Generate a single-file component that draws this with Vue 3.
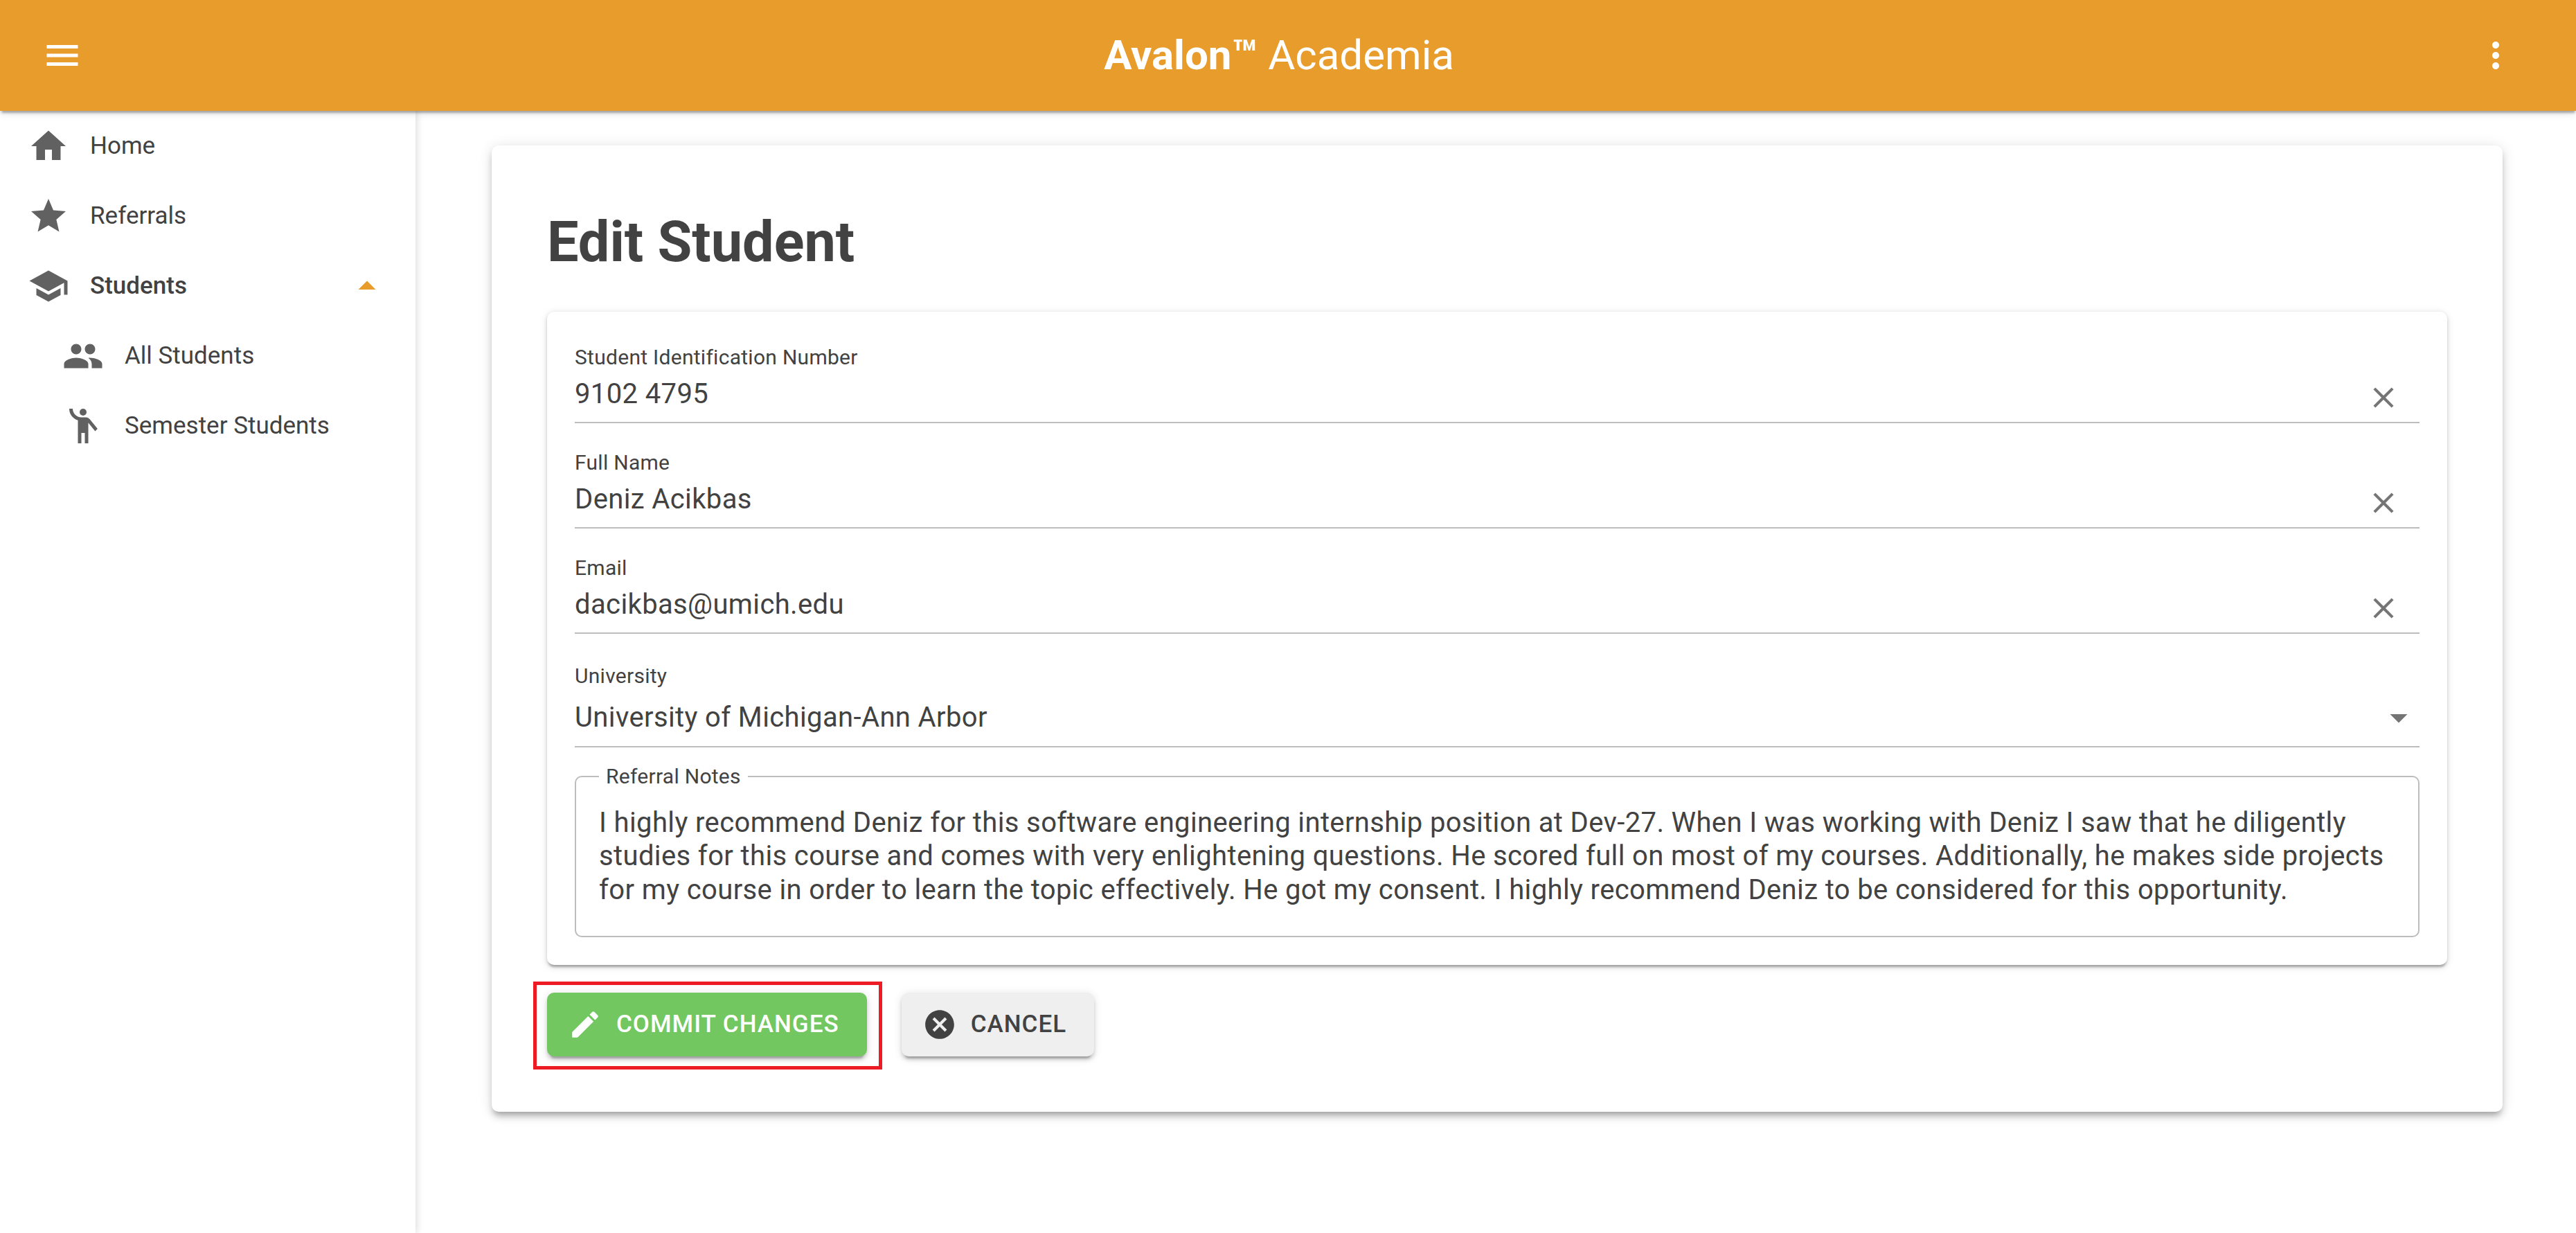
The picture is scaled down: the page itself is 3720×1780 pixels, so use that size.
<template>
  <div class="page">
    <header class="app-bar">
      <svg class="bar-icon" viewBox="0 0 24 24"><path :d="icons.menu" /></svg>
      <div class="brand"><b>Avalon™</b> Academia</div>
      <svg class="bar-icon" viewBox="0 0 24 24"><path :d="icons.more" /></svg>
    </header>

    <div class="body">
      <nav class="sidebar">
        <div
          v-for="item in nav"
          :key="item.label"
          class="nav-row"
          :class="{ sub: item.sub, open: item.open }"
        >
          <svg class="nav-icon" viewBox="0 0 24 24">
            <circle v-if="item.dot" cx="12" cy="4" r="2" />
            <path :d="item.icon" />
          </svg>
          <span class="nav-label">{{ item.label }}</span>
          <svg v-if="item.open" class="nav-arrow" viewBox="0 0 24 24"><path d="M7 14l5-5 5 5z" /></svg>
        </div>
      </nav>

      <main class="content">
        <section class="card">
          <h1 class="title">Edit Student</h1>

          <div class="form-card">
            <div v-for="f in fields" :key="f.label" class="field">
              <div class="field-label">{{ f.label }}</div>
              <div class="field-row">
                <span class="field-value">{{ f.value }}</span>
                <svg class="clear-icon" viewBox="0 0 24 24"><path :d="icons.close" /></svg>
              </div>
            </div>

            <div class="field select">
              <div class="field-label">University</div>
              <div class="field-row">
                <span class="field-value">University of Michigan-Ann Arbor</span>
                <svg class="select-icon" viewBox="0 0 24 24"><path d="M7 10l5 5 5-5z" /></svg>
              </div>
            </div>

            <fieldset class="notes">
              <legend>Referral Notes</legend>
              <div class="notes-text">{{ notes }}</div>
            </fieldset>
          </div>

          <div class="actions">
            <button class="btn primary">
              <svg class="btn-icon" viewBox="0 0 24 24"><path :d="icons.edit" /></svg>
              Commit Changes
              <span class="highlight"></span>
            </button>
            <button class="btn">
              <svg class="btn-icon" viewBox="0 0 24 24"><path :d="icons.cancel" /></svg>
              Cancel
            </button>
          </div>
        </section>
      </main>
    </div>
  </div>
</template>

<script setup>
const icons = {
  menu: 'M3 18h18v-2H3v2zm0-5h18v-2H3v2zm0-7v2h18V6H3z',
  more: 'M12 8c1.1 0 2-.9 2-2s-.9-2-2-2-2 .9-2 2 .9 2 2 2zm0 2c-1.1 0-2 .9-2 2s.9 2 2 2 2-.9 2-2-.9-2-2-2zm0 6c-1.1 0-2 .9-2 2s.9 2 2 2 2-.9 2-2-.9-2-2-2z',
  close: 'M19 6.41L17.59 5 12 10.59 6.41 5 5 6.41 10.59 12 5 17.59 6.41 19 12 13.41 17.59 19 19 17.59 13.41 12z',
  edit: 'M3 17.25V21h3.75L17.81 9.94l-3.75-3.75L3 17.25zM20.71 7.04c.39-.39.39-1.02 0-1.41l-2.34-2.34c-.39-.39-1.02-.39-1.41 0l-1.83 1.83 3.75 3.75 1.83-1.83z',
  cancel: 'M12 2C6.47 2 2 6.47 2 12s4.47 10 10 10 10-4.47 10-10S17.53 2 12 2zm5 13.59L15.59 17 12 13.41 8.41 17 7 15.59 10.59 12 7 8.41 8.41 7 12 10.59 15.59 7 17 8.41 13.41 12 17 15.59z',
}

const nav = [
  { label: 'Home', icon: 'M10 20v-6h4v6h5v-8h3L12 3 2 12h3v8z' },
  { label: 'Referrals', icon: 'M12 17.27L18.18 21l-1.64-7.03L22 9.24l-7.19-.61L12 2 9.19 8.63 2 9.24l5.46 4.73L5.82 21z' },
  { label: 'Students', open: true, icon: 'M5 13.18v4L12 21l7-3.82v-4L12 17l-7-3.82zM12 3L1 9l11 6 9-4.91V17h2V9L12 3z' },
  { label: 'All Students', sub: true, icon: 'M16 11c1.66 0 2.99-1.34 2.99-3S17.66 5 16 5c-1.66 0-3 1.34-3 3s1.34 3 3 3zm-8 0c1.66 0 2.99-1.34 2.99-3S9.66 5 8 5C6.34 5 5 6.34 5 8s1.34 3 3 3zm0 2c-2.33 0-7 1.17-7 3.5V19h14v-2.5c0-2.33-4.67-3.5-7-3.5zm8 0c-.29 0-.62.02-.97.05 1.16.84 1.97 1.97 1.97 3.45V19h6v-2.5c0-2.33-4.67-3.5-7-3.5z' },
  { label: 'Semester Students', sub: true, dot: true, icon: 'M15.89 8.11C15.5 7.72 14.83 7 13.53 7h-2.54C8.24 6.99 6 4.75 6 2H4c0 3.16 2.11 5.84 5 6.71V22h2v-6h2v6h2V10.05L18.95 15l1.41-1.41-4.47-5.48z' },
]

const fields = [
  { label: 'Student Identification Number', value: '9102 4795' },
  { label: 'Full Name', value: 'Deniz Acikbas' },
  { label: 'Email', value: 'dacikbas@umich.edu' },
]

const notes = 'I highly recommend Deniz for this software engineering internship position at Dev-27. When I was working with Deniz I saw that he diligently studies for this course and comes with very enlightening questions. He scored full on most of my courses. Additionally, he makes side projects for my course in order to learn the topic effectively. He got my consent. I highly recommend Deniz to be considered for this opportunity.'
</script>

<style scoped>
.page {
  height: 100vh;
  display: flex;
  flex-direction: column;
  overflow: hidden;
  font-family: Roboto, "Liberation Sans", sans-serif;
  color: #424242;
  background: #fff;
}

.app-bar {
  position: relative;
  z-index: 2;
  flex: 0 0 160px;
  display: flex;
  align-items: center;
  justify-content: space-between;
  padding: 0 86px 0 60px;
  background: #e79c2c;
  color: #fff;
  box-shadow: 0 5px 2.5px -2.5px rgba(0, 0, 0, 0.2), 0 2.5px 5px 0 rgba(0, 0, 0, 0.14), 0 2.5px 12px 0 rgba(0, 0, 0, 0.12);
}

.bar-icon {
  width: 60px;
  height: 60px;
  fill: #fff;
}

.brand {
  font-size: 60px;
  font-weight: 400;
  line-height: 1;
}

.brand b {
  font-weight: 700;
}

.body {
  flex: 1;
  display: flex;
  min-height: 0;
}

.sidebar {
  flex: 0 0 600px;
  box-sizing: border-box;
  box-shadow: 2px 0 10px rgba(0, 0, 0, 0.14);
}

.nav-row {
  height: 101px;
  display: flex;
  align-items: center;
  gap: 30px;
  padding: 0 40px;
  font-size: 35px;
}

.nav-row.sub {
  padding-left: 90px;
}

.nav-row.open .nav-label {
  font-weight: 500;
}

.nav-icon {
  width: 60px;
  height: 60px;
  fill: #616161;
  flex-shrink: 0;
}

.nav-arrow {
  width: 60px;
  height: 60px;
  fill: #e79c2c;
  margin-left: auto;
}

.content {
  flex: 1;
  padding: 50px 106px 0 110px;
}

.card {
  padding: 80px;
  background: #fff;
  border-radius: 10px;
  box-shadow: 0 7.5px 7.5px -5px rgba(0, 0, 0, 0.2), 0 7.5px 10px 0 rgba(0, 0, 0, 0.14), 0 2.5px 20px 0 rgba(0, 0, 0, 0.12);
}

.title {
  margin: 0 0 40px;
  font-size: 81px;
  font-weight: 700;
  line-height: 120px;
}

.form-card {
  padding: 48px 40px 40px;
  border-radius: 10px;
  box-shadow: 0 5px 2.5px -2.5px rgba(0, 0, 0, 0.2), 0 2.5px 5px 0 rgba(0, 0, 0, 0.14), 0 2.5px 12px 0 rgba(0, 0, 0, 0.12);
}

.field {
  margin-bottom: 39.5px;
}

.field-label {
  font-size: 30px;
  line-height: 36px;
  letter-spacing: 0.28px;
}

.field-row {
  box-sizing: border-box;
  height: 76.5px;
  display: flex;
  justify-content: space-between;
  padding-top: 5px;
  border-bottom: 2.5px solid #bdbdbd;
}

.field-value {
  font-size: 40px;
  line-height: 60px;
  letter-spacing: 0.375px;
}

.clear-icon {
  width: 50px;
  height: 50px;
  fill: #757575;
  margin: 9.5px 27px 0 0;
}

.select {
  margin-top: 43px;
  margin-bottom: 23.5px;
}

.select .field-row {
  height: 85.5px;
  padding-top: 12px;
}

.select-icon {
  width: 60px;
  height: 60px;
  fill: #757575;
}

.notes {
  margin: 0;
  padding: 25px 33px 42px;
  border: 2.5px solid #bdbdbd;
  border-radius: 10px;
}

.notes legend {
  margin-left: 0;
  padding: 0 10px;
  font-size: 30px;
  line-height: 36px;
  letter-spacing: 0.28px;
}

.notes-text {
  font-size: 40px;
  line-height: 48.6px;
  letter-spacing: 0.375px;
}

.actions {
  display: flex;
  gap: 50px;
  margin-top: 40px;
}

.btn {
  position: relative;
  height: 91.25px;
  display: flex;
  align-items: center;
  padding: 0 40px 0 30px;
  border: 0;
  border-radius: 10px;
  background: #efefef;
  color: #424242;
  font-family: inherit;
  font-size: 35px;
  font-weight: 500;
  letter-spacing: 1px;
  text-transform: uppercase;
  box-shadow: 0 7.5px 2.5px -5px rgba(0, 0, 0, 0.2), 0 5px 5px 0 rgba(0, 0, 0, 0.14), 0 2.5px 12.5px 0 rgba(0, 0, 0, 0.12);
}

.btn.primary {
  background: #72c761;
  color: #fff;
}

.btn-icon {
  width: 50px;
  height: 50px;
  margin-right: 20px;
  fill: currentColor;
}

.highlight {
  position: absolute;
  inset: -16px -22px -19px -20px;
  border: 5px solid #ed1c24;
  pointer-events: none;
}
</style>
